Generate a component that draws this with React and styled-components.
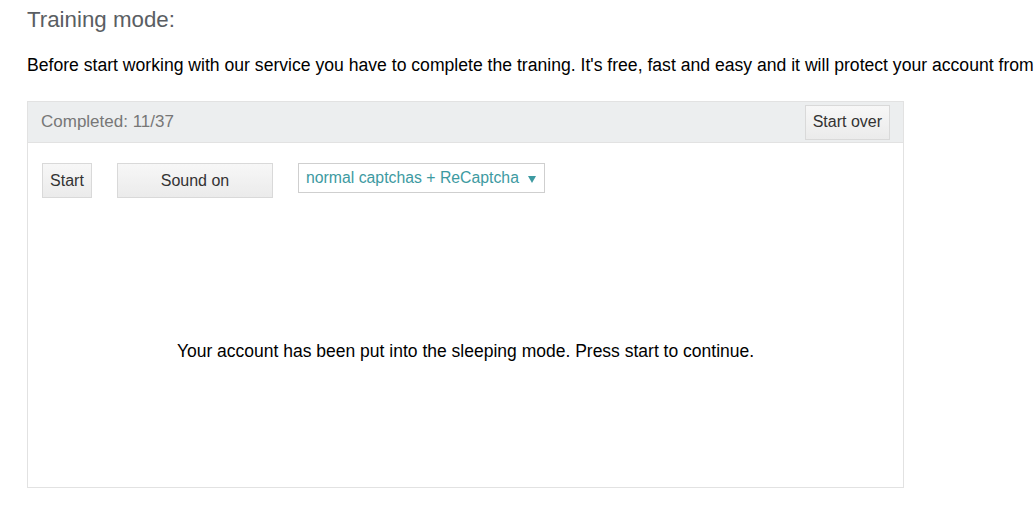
import React from "react"
import styled, { createGlobalStyle } from "styled-components"

const GlobalStyle = createGlobalStyle`
  html, body {
    margin: 0;
    padding: 0;
    background: #fff;
    overflow: hidden;
  }
  body {
    font-family: "Liberation Sans", Arial, sans-serif;
  }
`

const Page = styled.div`
  padding: 6px 0 0 27px;
  width: 1400px;
`

const Title = styled.h2`
  margin: 0;
  font-size: 22.3px;
  font-weight: 400;
  line-height: 28px;
  color: #5a5e63;
`

const Intro = styled.p`
  margin: 19px 0 0;
  font-size: 17.6px;
  line-height: 24px;
  color: #000;
  white-space: nowrap;
`

const Panel = styled.div`
  margin-top: 24px;
  width: 875px;
  height: 385px;
  border: 1px solid #e2e2e2;
  display: flex;
  flex-direction: column;
`

const PanelHead = styled.div`
  height: 40px;
  background: #eceeef;
  border-bottom: 1px solid #e2e2e2;
  display: flex;
  align-items: center;
  justify-content: space-between;
  padding: 0 13px 0 13px;
`

const Progress = styled.span`
  font-size: 17px;
  color: #777;
`

const Button = styled.button`
  height: 35px;
  width: ${({ w }) => (w ? `${w}px` : "auto")};
  padding: 0 7px;
  border: 1px solid #d9d9d9;
  background: linear-gradient(#f7f7f7, #ebebeb);
  font-family: "Liberation Sans", Arial, sans-serif;
  font-size: 16px;
  color: #333;
  cursor: pointer;
`

const Toolbar = styled.div`
  display: flex;
  align-items: flex-start;
  padding: 20px 0 0 14px;
  gap: 25px;
`

const Select = styled.div`
  height: 30px;
  box-sizing: border-box;
  border: 1px solid #cfcfcf;
  display: flex;
  align-items: center;
  padding: 0 8px 0 7px;
  gap: 9px;
  font-size: 15.8px;
  color: #3d9aa1;
  background: #fff;
`

const Caret = styled.span`
  width: 0;
  height: 0;
  border-left: 4px solid transparent;
  border-right: 4px solid transparent;
  border-top: 7px solid #3d9aa1;
  margin-top: 2px;
`

const Message = styled.div`
  flex: 1;
  display: flex;
  align-items: center;
  justify-content: center;
  padding-top: 18px;
  font-size: 17.5px;
  color: #000;
`

export default function App() {
  return (
    <Page>
      <GlobalStyle />
      <Title>Training mode:</Title>
      <Intro>
        Before start working with our service you have to complete the traning. It's free, fast and easy and it will protect your account from being banned.
      </Intro>
      <Panel>
        <PanelHead>
          <Progress>Completed: 11/37</Progress>
          <Button>Start over</Button>
        </PanelHead>
        <Toolbar>
          <Button w={50}>Start</Button>
          <Button w={156}>Sound on</Button>
          <Select>
            normal captchas + ReCaptcha
            <Caret />
          </Select>
        </Toolbar>
        <Message>Your account has been put into the sleeping mode. Press start to continue.</Message>
      </Panel>
    </Page>
  )
}
